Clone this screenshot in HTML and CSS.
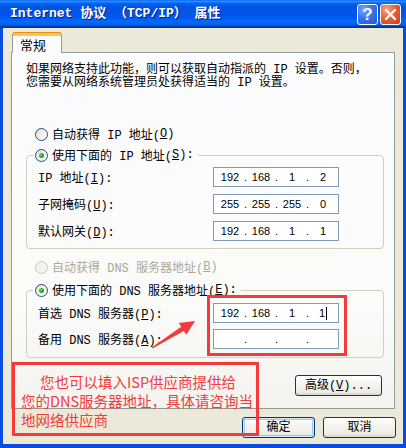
FILE: index.html
```html
<!DOCTYPE html>
<html lang="zh-CN">
<head>
    <meta charset="UTF-8">
    <title>Internet 协议 (TCP/IP) 属性</title>
    <link rel="stylesheet" href="styles.css">
</head>
<body>
    <div class="window">
        <div class="titlebar">
            <span class="title">Internet 协议 （TCP/IP） 属性</span>
            <div class="caption-btns">
                <span class="cap-btn help">?</span>
                <span class="cap-btn close">
                    <svg width="13" height="13" viewBox="0 0 13 13"><path d="M2 2 L11 11 M11 2 L2 11" stroke="#fff" stroke-width="2.4" stroke-linecap="round"/></svg>
                </span>
            </div>
        </div>

        <div class="client">
            <div class="tabs"><span class="tab">常规</span></div>

            <div class="panel">
                <p class="intro">如果网络支持此功能，则可以获取自动指派的 IP 设置。否则，<br>您需要从网络系统管理员处获得适当的 IP 设置。</p>

                <div class="option opt-first"><span class="radio"></span>自动获得 IP 地址(<u>O</u>)</div>
                <fieldset class="group">
                    <legend class="option"><span class="radio on"></span>使用下面的 IP 地址(<u>S</u>):</legend>
                    <div class="rows">
                        <div class="row">
                            <span class="label">IP 地址(<u>I</u>):</span>
                            <div class="ipbox"><span class="oct">192</span><span class="dot">.</span><span class="oct">168</span><span class="dot">.</span><span class="oct">1</span><span class="dot">.</span><span class="oct">2</span></div>
                        </div>
                        <div class="row">
                            <span class="label">子网掩码(<u>U</u>):</span>
                            <div class="ipbox"><span class="oct">255</span><span class="dot">.</span><span class="oct">255</span><span class="dot">.</span><span class="oct">255</span><span class="dot">.</span><span class="oct">0</span></div>
                        </div>
                        <div class="row">
                            <span class="label">默认网关(<u>D</u>):</span>
                            <div class="ipbox"><span class="oct">192</span><span class="dot">.</span><span class="oct">168</span><span class="dot">.</span><span class="oct">1</span><span class="dot">.</span><span class="oct">1</span></div>
                        </div>
                    </div>
                </fieldset>

                <div class="option opt-dns disabled"><span class="radio"></span>自动获得 DNS 服务器地址(<u>B</u>)</div>
                <fieldset class="group group-dns">
                    <legend class="option"><span class="radio on"></span>使用下面的 DNS 服务器地址(<u>E</u>):</legend>
                    <div class="rows">
                        <div class="row">
                            <span class="label">首选 DNS 服务器(<u>P</u>):</span>
                            <div class="ipbox"><span class="oct">192</span><span class="dot">.</span><span class="oct">168</span><span class="dot">.</span><span class="oct">1</span><span class="dot">.</span><span class="oct">1<span class="caret"></span></span></div>
                        </div>
                        <div class="row">
                            <span class="label">备用 DNS 服务器(<u>A</u>):</span>
                            <div class="ipbox"><span class="oct"></span><span class="dot">.</span><span class="oct"></span><span class="dot">.</span><span class="oct"></span><span class="dot">.</span><span class="oct"></span></div>
                        </div>
                    </div>
                </fieldset>

                <div class="adv-row"><button class="btn btn-adv">高级(<u>V</u>)...</button></div>
            </div>

            <div class="footer">
                <button class="btn btn-default">确定</button>
                <button class="btn">取消</button>
            </div>
        </div>

        <!-- annotations drawn over the dialog -->
        <div class="mark mark-dns"></div>
        <svg class="arrow" width="48" height="33" viewBox="0 0 48 33">
            <polygon points="1.6,29.4 31.2,8.8 28.8,5 45.1,2.9 36.2,16.8 33.8,13 2.4,30.6" fill="#f33b3b"/>
        </svg>
        <div class="mark note">您也可以填入ISP供应商提供给<br>您的DNS服务器地址，具体请咨询当<br>地网络供应商</div>
    </div>
</body>
</html>
```

FILE: styles.css
```css
body {
    margin: 0;
    font-family: "Liberation Mono", "Noto Sans CJK SC", monospace;
    font-size: 12px;
    color: #000;
}
.window {
    position: relative;
    width: 406px;
    height: 448px;
    background: #0b4ce0;
    overflow: hidden;
}
.titlebar {
    height: 28px;
    display: flex;
    align-items: center;
    justify-content: space-between;
    background: linear-gradient(to bottom, #0058ee 0%, #3593ff 4%, #288eff 6%, #127dff 8%, #036ffc 10%, #0262ee 14%, #0057e5 20%, #0054e3 24%, #0055eb 56%, #005bf5 66%, #026afe 76%, #0062ef 86%, #0052d6 92%, #0040ab 94%, #003092 100%);
}
.title {
    margin-left: 10px;
    color: #fff;
    font-weight: bold;
    font-size: 13px;
    line-height: 16px;
    white-space: nowrap;
    text-shadow: 1px 1px #0a1883;
}
.caption-btns {
    display: flex;
    gap: 2px;
    margin-right: 5px;
}
.cap-btn {
    width: 21px;
    height: 21px;
    box-sizing: border-box;
    border: 1px solid #fff;
    border-radius: 3px;
    display: flex;
    align-items: center;
    justify-content: center;
}
.help {
    background: radial-gradient(circle at 30% 25%, #7aa6ff 0%, #3a72ec 45%, #2157d8 100%);
    color: #fff;
    font-family: "Liberation Sans", sans-serif;
    font-weight: bold;
    font-size: 17px;
    line-height: 1;
}
.close {
    background: radial-gradient(circle at 30% 25%, #f7a689 0%, #e5603a 45%, #cd3d14 100%);
}
.client {
    margin: 0 3px;
    height: 416px;
    background: #ece9d8;
}
.tabs {
    padding: 5px 0 0 9px;
    display: flex;
}
.tab {
    position: relative;
    z-index: 1;
    width: 50px;
    height: 20px;
    box-sizing: border-box;
    margin-bottom: -1px;
    border: 1px solid #919b9c;
    border-top: 3px solid #ffc83c;
    border-bottom: none;
    border-radius: 3px 3px 0 0;
    background: #fcfcfe;
    box-shadow: 0 -1px 0 #e68b2c;
    padding-left: 7px;
    line-height: 17px;
    font-family: "Noto Sans CJK SC", sans-serif;
    font-size: 13px;
}
.panel {
    margin-left: 8px;
    width: 384px;
    height: 357px;
    box-sizing: border-box;
    border: 1px solid #919b9c;
    background: linear-gradient(to bottom, #fcfcfe 0%, #fbfbfa 70%, #f4f3ee 100%);
}
.intro {
    margin: 11px 0 0 14px;
    line-height: 13px;
    white-space: nowrap;
}
.option {
    display: flex;
    align-items: center;
    height: 16px;
    white-space: nowrap;
}
.opt-first {
    margin: 36px 0 0 23px;
}
.opt-dns {
    margin: 10px 0 0 23px;
}
.disabled {
    color: #aca899;
}
.radio {
    width: 13px;
    height: 13px;
    box-sizing: border-box;
    border: 1px solid #1c5180;
    border-radius: 50%;
    background: linear-gradient(135deg, #dcd9cd 0%, #f4f3ee 55%, #fff 100%);
    margin-right: 4px;
    display: flex;
    align-items: center;
    justify-content: center;
}
.disabled .radio {
    border-color: #cac8bb;
    background: #f4f3ee;
}
.radio.on::after {
    content: "";
    width: 5px;
    height: 5px;
    border-radius: 50%;
    background: radial-gradient(circle at 35% 35%, #5fd35f 0%, #21a121 60%, #1a8a1a 100%);
}
.group {
    margin: 5px 0 0 14px;
    width: 358px;
    box-sizing: border-box;
    border: 1px solid #d0d0bf;
    border-radius: 4px;
    padding: 0 0 7px 6px;
}
.group legend {
    padding: 0 4px 0 2px;
}
.group-dns {
    margin-top: 7px;
    padding-bottom: 8px;
}
.rows {
    display: flex;
    flex-direction: column;
    gap: 7px;
    padding: 4px 0 0 5px;
}
.group-dns .rows {
    gap: 6px;
    padding-top: 5px;
}
.row {
    display: flex;
    align-items: center;
    height: 20px;
}
.label {
    width: 175px;
    white-space: nowrap;
}
.ipbox {
    width: 126px;
    height: 20px;
    box-sizing: border-box;
    border: 1px solid #7f9db9;
    background: #fff;
    display: flex;
    align-items: center;
    padding-left: 4px;
    font-family: "Liberation Sans", sans-serif;
    font-size: 11px;
}
.oct {
    width: 24px;
    text-align: center;
    display: flex;
    align-items: center;
    justify-content: center;
}
.dot {
    width: 7px;
    text-align: center;
}
.caret {
    display: inline-block;
    width: 1px;
    height: 13px;
    background: #000;
    margin-left: 1px;
}
.adv-row {
    display: flex;
    justify-content: flex-end;
    padding-right: 12px;
    margin-top: 17px;
}
.btn {
    height: 21px;
    box-sizing: border-box;
    border: 1px solid #003c74;
    border-radius: 3px;
    background: linear-gradient(to bottom, #fff 0%, #f5f4ef 40%, #ecebe6 85%, #d6d0c5 100%);
    font-family: "Liberation Mono", "Noto Sans CJK SC", monospace;
    font-size: 12px;
    color: #000;
    padding: 0;
    line-height: 18px;
    cursor: pointer;
}
.btn-adv {
    width: 87px;
}
.footer {
    display: flex;
    justify-content: flex-end;
    gap: 8px;
    padding: 8px 7px 0 0;
}
.footer .btn {
    width: 73px;
}
.btn-default {
    box-shadow: inset 0 0 0 1px #cee7ff, inset 0 0 0 2px #a9c5f4;
}
.mark {
    position: absolute;
    box-sizing: border-box;
    border: 3px solid #f33b3b;
}
.mark-dns {
    left: 207px;
    top: 295px;
    width: 140px;
    height: 61px;
}
.arrow {
    position: absolute;
    left: 150px;
    top: 318px;
}
.note {
    left: 12px;
    top: 362px;
    width: 247px;
    height: 74px;
    padding: 7px 0 0 6px;
    font-family: "Noto Sans CJK SC", sans-serif;
    font-size: 14.5px;
    line-height: 19px;
    color: #f03c3c;
    white-space: nowrap;
    text-indent: 19px;
}
```
